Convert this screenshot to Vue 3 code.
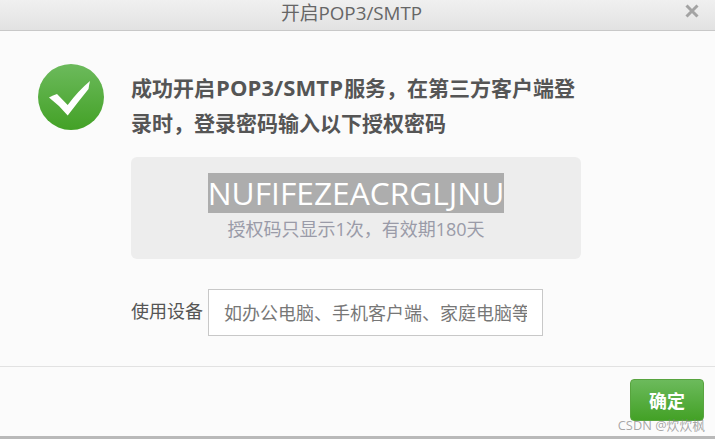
<template>
  <div class="dialog">
    <div class="dialog-header">
      <span class="dialog-title">开启POP3/SMTP</span>
      <svg class="close-icon" viewBox="0 0 14 14" width="14" height="14">
        <path d="M1.5 1.5 L12.5 12.5 M12.5 1.5 L1.5 12.5" stroke="#a3a3a3" stroke-width="3" fill="none" />
      </svg>
    </div>

    <div class="dialog-body">
      <svg class="ok-icon" viewBox="0 0 66 66" width="66" height="66">
        <defs>
          <linearGradient id="okGrad" x1="0" y1="0" x2="0" y2="1">
            <stop offset="0" stop-color="#6cba5c" />
            <stop offset="1" stop-color="#43a126" />
          </linearGradient>
        </defs>
        <circle cx="33" cy="33" r="33" fill="url(#okGrad)" />
        <path d="M11 33.500 Q15 31 19 30 L29.700 41 Q40 27 52 17 Q51 21 50.500 25 Q40 38 29.700 51.500 Q21 41 11 33.500 Z" fill="#fff" />
      </svg>

      <div class="main">
        <p class="message">成功开启<span class="latin">POP3/SMTP</span>服务，在第三方客户端登<br />录时，登录密码输入以下授权密码</p>
        <div class="code-box">
          <div class="code"><span class="code-text">{{ code }}</span></div>
          <div class="code-tip">授权码只显示1次，有效期180天</div>
        </div>
        <div class="device-row">
          <label class="device-label">使用设备</label>
          <input class="device-input" :placeholder="placeholder" />
        </div>
      </div>
    </div>

    <div class="dialog-footer">
      <button class="btn-ok">确定</button>
    </div>
    <span class="watermark">CSDN @炊炊枫</span>
  </div>
</template>

<script setup>
const code = 'NUFIFEZEACRGLJNU'
const placeholder = '如办公电脑、手机客户端、家庭电脑等'
</script>

<style>
html,
body {
  margin: 0;
  background: #fff;
}
</style>

<style scoped>
.dialog {
  position: relative;
  width: 715px;
  height: 439px;
  box-sizing: border-box;
  display: flex;
  flex-direction: column;
  background: #fbfbfb;
  border-bottom: 3px solid #b9b9b9;
  font-family: "Open Sans", "Noto Sans CJK SC", sans-serif;
  overflow: hidden;
}

.dialog-header {
  position: relative;
  flex: none;
  height: 31px;
  box-sizing: border-box;
  border-bottom: 1px solid #c8c8c8;
  background: linear-gradient(#f0f0f0, #e2e2e2);
  display: flex;
  align-items: center;
  justify-content: center;
}

.dialog-title {
  font-size: 18.8px;
  color: #666;
  margin: -7px 12px 0 0;
}

.close-icon {
  position: absolute;
  right: 16px;
  top: 4px;
}

.dialog-body {
  flex: 1;
  display: flex;
  padding: 33px 0 0 38px;
}

.ok-icon {
  flex: none;
  margin-right: 27px;
}

.main {
  width: 450px;
}

.message {
  margin: 7px 0 0;
  font-size: 21px;
  line-height: 35px;
  font-weight: 700;
  color: #555;
}

.latin {
  margin: 0 1px;
  font-size: 22px;
  line-height: 1;
  letter-spacing: 0.1px;
}

.code-box {
  margin-top: 16px;
  height: 102px;
  box-sizing: border-box;
  padding-top: 16px;
  background: #ededed;
  border-radius: 6px;
}

.code {
  display: flex;
  justify-content: center;
  height: 40px;
}

.code-text {
  display: block;
  height: 40px;
  line-height: 40px;
  font-size: 31.7px;
  background: #adadad;
  color: #fff;
}

.code-tip {
  font-size: 18px;
  line-height: 32px;
  color: #9a9ba8;
  text-align: center;
}

.device-row {
  margin-top: 30px;
  display: flex;
  align-items: center;
  gap: 5px;
}

.device-label {
  margin-top: -6px;
  font-size: 18px;
  color: #555;
  white-space: nowrap;
}

.device-input {
  width: 335px;
  height: 47px;
  box-sizing: border-box;
  padding: 0 15px;
  border: 1px solid #c8c8c8;
  background: #fff;
  font-family: inherit;
  font-size: 18px;
  outline: none;
}

.device-input::placeholder {
  color: #777;
  opacity: 1;
}

.dialog-footer {
  flex: none;
  height: 70px;
  box-sizing: border-box;
  border-top: 1px solid #e2e2e2;
  display: flex;
  justify-content: flex-end;
  padding: 12px 11px 0 0;
}

.btn-ok {
  width: 74px;
  height: 42px;
  border: 1px solid #58a43f;
  border-radius: 4px;
  background: linear-gradient(#6cba5c, #43a126);
  color: #fff;
  font-family: inherit;
  font-size: 18px;
  font-weight: 700;
}

.watermark {
  position: absolute;
  right: 10px;
  bottom: 2px;
  font-size: 12.800px;
  color: rgba(130, 130, 130, 0.7);
}
</style>
